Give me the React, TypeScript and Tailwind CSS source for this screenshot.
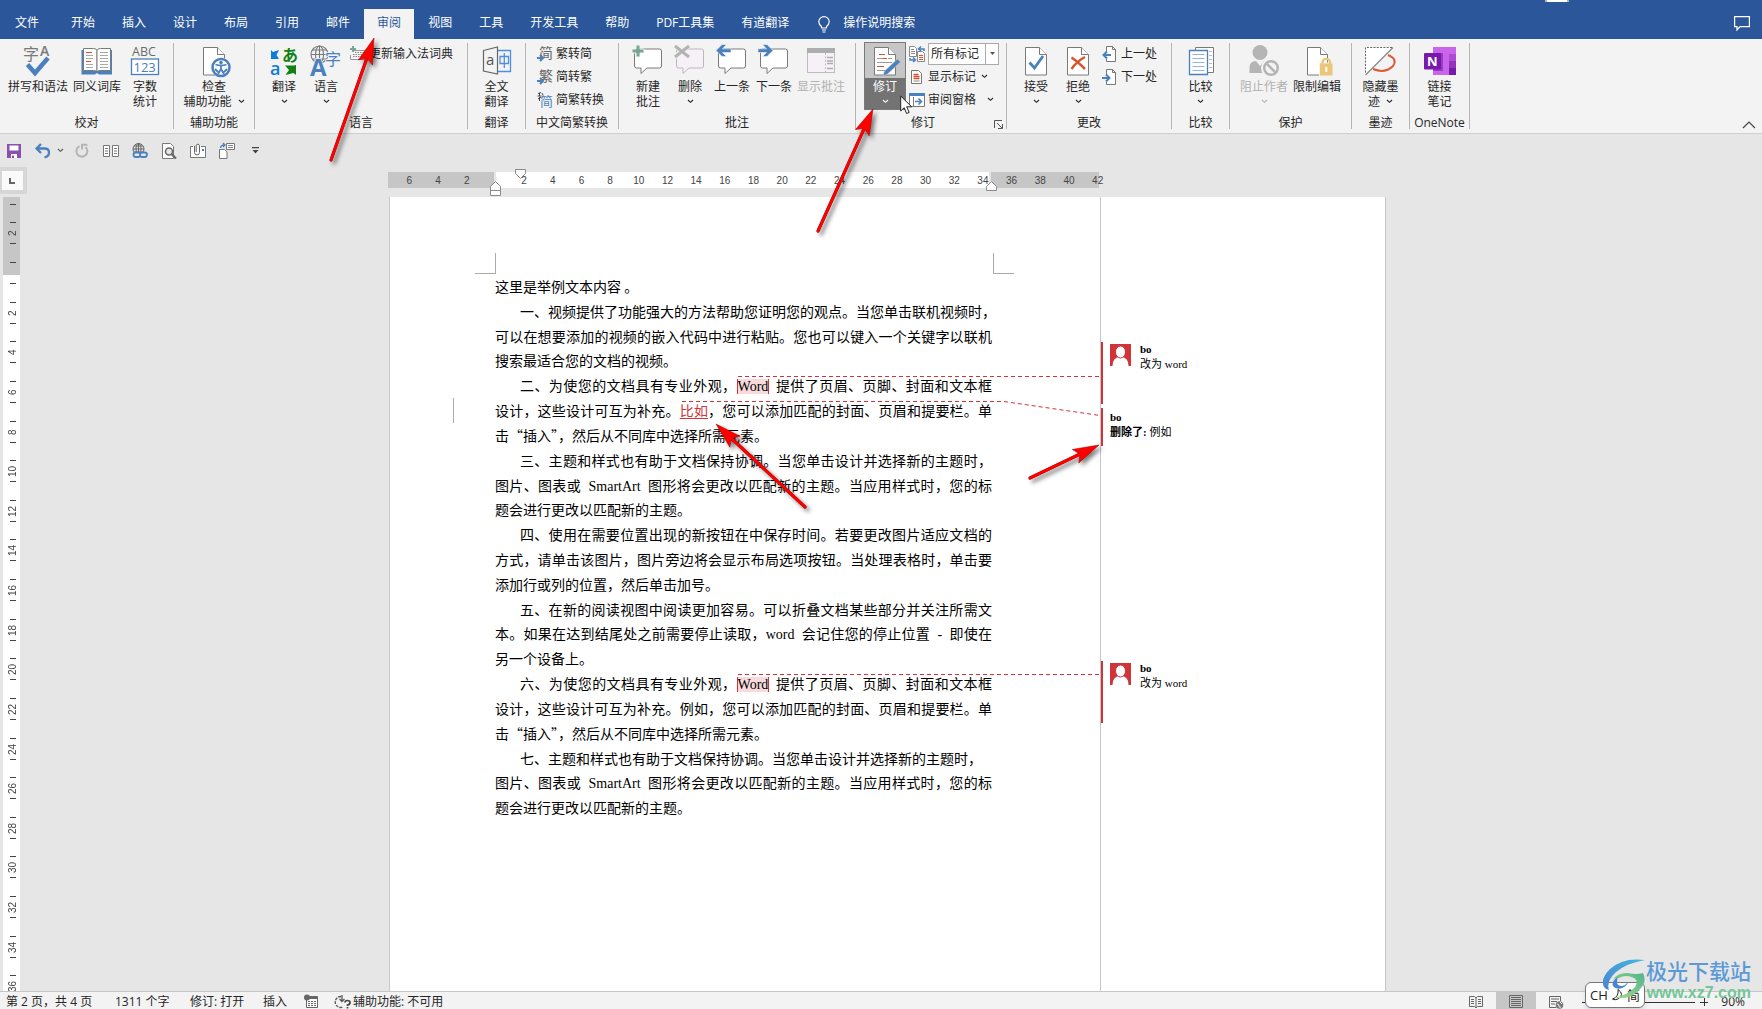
import type { ReactNode } from "react";
import clsx from "clsx";

const BLUE = "#4a80bd";
const GRAY = "#7a7a7a";

/* ---------- small shared bits ---------- */

function Chevron({ className }: { className?: string }) {
  return (
    <svg width="7" height="5" viewBox="0 0 7 5" className={clsx("shrink-0", className)} fill="none" stroke="currentColor" strokeWidth="1.1">
      <path d="M1 1l2.5 2.3L6 1" />
    </svg>
  );
}

function Big({ children }: { children: ReactNode }) {
  return (
    <svg width="32" height="32" viewBox="0 0 32 32" fill="none" className="shrink-0 overflow-visible" fontFamily='"Open Sans","Noto Sans CJK SC",sans-serif'>
      {children}
    </svg>
  );
}

function Small({ children }: { children: ReactNode }) {
  return (
    <svg width="16" height="16" viewBox="0 0 16 16" fill="none" className="shrink-0 overflow-visible" fontFamily='"Open Sans","Noto Sans CJK SC",sans-serif'>
      {children}
    </svg>
  );
}

/* ---------- large ribbon icons ---------- */

const SpellIcon = () => (
  <Big>
    <text x="1" y="15" fontSize="16" fill={GRAY}>字</text>
    <text x="18" y="11" fontSize="14" fontWeight="600" fill={GRAY}>A</text>
    <path d="M5.5 19.500l7.500 8.500L26 13" stroke={BLUE} strokeWidth="4.500" />
  </Big>
);

const BookIcon = () => (
  <Big>
    <path d="M.5 5h30.500v24.500H18l-2-1.500-2 1.500H.5z" fill={BLUE} />
    <path d="M2.500 3.500h10q3 0 3.500 2v21.500q-.5-1.500-3.500-1.500h-10z" fill="#fff" stroke={GRAY} />
    <path d="M29.500 3.500h-10q-3 0-3.500 2v21.500q.5-1.500 3.500-1.500h10z" fill="#fff" stroke={GRAY} />
    <path d="M5 7.500h6M5 16.500h5" stroke="#d8532b" />
    <path d="M5 10.500h7M5 13.500h7M5 19.500h7M5 22.500h7" stroke="#aaa" />
    <path d="M19 7.500h8M19 10.500h8M19 13.500h8M19 16.500h8M19 19.500h8M19 22.500h8" stroke="#aaa" />
  </Big>
);

const CountIcon = () => (
  <Big>
    <text x="3" y="11" fontSize="12.500" fill="#6a6a6a">ABC</text>
    <rect x="2.500" y="14" width="27" height="15.500" fill="#fff" stroke={BLUE} strokeWidth="1.300" />
    <text x="4.500" y="26.500" fontSize="13" fill={BLUE}>123</text>
  </Big>
);

const PageShape = ({ x = 5.5, w = 21 }: { x?: number; w?: number }) => (
  <>
    <path d={`M${x} 2.500h${w - 7}l7 7v20.500h-${w}z`} fill="#fff" stroke={GRAY} />
    <path d={`M${x + w - 7} 2.500v7h7`} fill="#fff" stroke={GRAY} />
  </>
);

const AccessIcon = () => (
  <Big>
    <PageShape />
    <circle cx="23" cy="22.500" r="10" fill="#f3f3f3" />
    <circle cx="23" cy="22.500" r="8.500" fill="#fff" stroke={BLUE} strokeWidth="2.500" />
    <path d="M17.500 19.500q5.500 2 11 0M23 20v4M23 24l-3 5M23 24l3 5M17 24l3 3M29 24l-3 3" stroke={BLUE} strokeWidth="1.800" />
    <circle cx="23" cy="17.500" r="1.800" fill={BLUE} />
  </Big>
);

const TranslateIcon = () => (
  <Big>
    <path d="M3 5l2 2 6-2-2.500 5 2.500 4H3z" fill="#0f7bd8" />
    <text x="2" y="30" fontSize="18" fontWeight="600" fill="#0f7bd8">a</text>
    <text x="14" y="16" fontSize="16" fontWeight="700" fill="#138013">あ</text>
    <path d="M28 20v10l-2.500-2-8 2 3.500-5-4-4.500h9z" fill="#138013" />
  </Big>
);

const LanguageIcon = () => (
  <Big>
    <g stroke={GRAY} strokeWidth="1.100">
      <circle cx="9.500" cy="9.500" r="8.500" />
      <ellipse cx="9.500" cy="9.500" rx="4" ry="8.500" />
      <path d="M9.500 1v17M1 9.500h17M2.500 5h14M2.500 14h14" />
    </g>
    <text x="0" y="31" fontSize="24" fontWeight="700" fill={BLUE} stroke="#f3f3f3" strokeWidth="1.500" paintOrder="stroke">A</text>
    <text x="15" y="20" fontSize="16" fill={BLUE} stroke="#f3f3f3" strokeWidth="1.500" paintOrder="stroke">字</text>
  </Big>
);

const FullTranslateIcon = () => (
  <Big>
    <path d="M2.500 5.500l14-3.500v27l-14-3z" stroke="#666" strokeWidth="1.200" />
    <text x="5" y="20" fontSize="15" fill="#555">a</text>
    <path d="M17 5.500h12.500v21H17M19 11.500h8.500v7H19zM23.300 8v15" stroke="#4f8fe0" strokeWidth="1.300" />
  </Big>
);

const Bubble = ({ muted }: { muted?: boolean }) => (
  <path d="M4.500 4h23a2 2 0 0 1 2 2v15a2 2 0 0 1-2 2H15l-6 5.500V23H4.500a2 2 0 0 1-2-2V6a2 2 0 0 1 2-2z" fill={muted ? "#f6f1f7" : "#fff"} stroke={muted ? "#b9b9b9" : GRAY} />
);

const NewCommentIcon = () => (
  <Big>
    <Bubble />
    <path d="M0 4h4V0h4v4h4v4H8v4H4V8H0z" fill="#74a892" stroke="#f3f3f3" />
  </Big>
);

const DeleteCommentIcon = () => (
  <Big>
    <Bubble muted />
    <path d="M1 0l14 12M15 0L1 12" stroke="#f3f3f3" strokeWidth="5" />
    <path d="M1 1l14 11M15 1L1 12" stroke="#b3b3b3" strokeWidth="3" />
  </Big>
);

const PrevCommentIcon = () => (
  <Big>
    <Bubble />
    <path d="M0 5.500L6-.5h4.500l-4 4.300H15V7.500H6.500l4 4H6z" fill={BLUE} stroke="#f3f3f3" strokeWidth=".6" />
  </Big>
);

const NextCommentIcon = () => (
  <Big>
    <Bubble />
    <path d="M15 5.500L9-.5H4.500l4 4.300H0V7.500h8.500l-4 4H9z" fill={BLUE} stroke="#f3f3f3" strokeWidth=".6" />
  </Big>
);

const ShowCommentsIcon = () => (
  <Big>
    <rect x="2.500" y="3.500" width="27" height="24" fill="#f6f1f7" stroke="#bdbdbd" />
    <path d="M2 3h28v5H2z" fill="#adadad" />
    <path d="M20.500 8v19" stroke="#bdbdbd" strokeDasharray="2 1.500" />
    <path d="M22 12.500h6M22 16h6M22 18.500h6M22 23.500h6" stroke="#adadad" strokeWidth="1.500" />
  </Big>
);

const TrackIcon = () => (
  <Big>
    <PageShape />
    <path d="M8 13.500h9M19 13.500h4M8 17.500h15M8 21.500h4M8 25.500h8" stroke="#999" />
    <path d="M10 9.500h6M14 13.500h4M8 21.500h7" stroke="#d8532b" strokeWidth="1.200" />
    <path d="M28.500 14l3 3-13 12-4.500 2 1.500-5z" fill={BLUE} stroke="#c6c6c6" strokeWidth=".7" />
  </Big>
);

const AcceptIcon = () => (
  <Big>
    <PageShape />
    <path d="M9.500 17.500l5 5.500 8.500-12" stroke={BLUE} strokeWidth="2.800" />
  </Big>
);

const RejectIcon = () => (
  <Big>
    <PageShape />
    <path d="M9.500 12.500q6 4 13.500 11.500M23 12q-8 4-13.500 12" stroke="#d8532b" strokeWidth="2.500" />
  </Big>
);

const CompareIcon = () => (
  <Big>
    <path d="M10.500 2.500h18v25h-18z" fill="#fff" stroke={GRAY} />
    <path d="M24 6.500h3M24 10.500h3M24 14.500h3M24 18.500h3M24 22.500h3" stroke="#bbb" />
    <path d="M4.500 5.500h18v24h-18z" fill="#fff" stroke={BLUE} strokeWidth="1.300" />
    <path d="M7.500 9.500h12M7.500 13.500h12M7.500 17.500h12M7.500 21.500h12M7.500 25.500h12" stroke="#93b4d8" />
  </Big>
);

const BlockAuthorIcon = () => (
  <Big>
    <circle cx="12" cy="7.500" r="7.500" fill="#b5b5b5" />
    <path d="M1.500 28v-5q0-7 6.500-7l4 5 4-5q6 0 6.500 5v7z" fill="#b5b5b5" />
    <circle cx="23" cy="23" r="8" fill="#f3f3f3" stroke="#f3f3f3" strokeWidth="4" />
    <circle cx="23" cy="23" r="6.800" stroke="#b5b5b5" strokeWidth="2.500" />
    <path d="M18 18l10 10" stroke="#b5b5b5" strokeWidth="2.500" />
  </Big>
);

const RestrictIcon = () => (
  <Big>
    <PageShape x={6.5} w={20} />
    <path d="M18.500 18v13h13.500V18z" fill="#ecc67a" stroke="#f3f3f3" />
    <path d="M21.500 19v-2.500a4 4 0 0 1 7.500 0V19" stroke="#ecc67a" strokeWidth="2.300" />
    <path d="M25.300 22v5" stroke="#fff" strokeWidth="2" />
  </Big>
);

const HideInkIcon = () => (
  <Big>
    <path d="M23 10q10 4 5 11-8 8-20 3" stroke="#dd5a38" strokeWidth="2" />
    <path d="M.5 2.500h27L.5 29.500z" fill="#fff" />
    <path d="M27 2.500H.5v26" stroke="#666" strokeDasharray="2 1.300" />
    <path d="M28 2.500L.5 30" stroke="#888" strokeWidth="1.300" />
  </Big>
);

const OneNoteIcon = () => (
  <Big>
    <path d="M9 2h23v28H9z" fill="#ca64ea" />
    <path d="M25 9h7v7h-7z" fill="#ae4bd5" />
    <path d="M25 16h7v7h-7z" fill="#9332bf" />
    <path d="M25 23h7v7h-7z" fill="#7719aa" />
    <path d="M9 8h10v18H9z" fill="#9a3bc4" />
    <rect x="0" y="8" width="17" height="16.500" rx="1" fill="#7719aa" />
    <text x="3" y="21" fontSize="13" fontWeight="700" fill="#fff">N</text>
  </Big>
);

/* ---------- small ribbon icons ---------- */

const DictIcon = () => (
  <Small>
    <path d="M3.500 4.500h12v9H.5V9" stroke="#999" />
    <path d="M3 8.500h11M3 10.500h11M5 6.500h9" stroke="#888" strokeDasharray="1.500 1" />
    <path d="M0 3h6M3 0v6" stroke="#74a892" strokeWidth="2" />
  </Small>
);

function ConvertIcon({ char, blue }: { char: string; blue?: boolean }) {
  return (
    <Small>
      {blue ? (
        <>
          <path d="M1 1.500l3-1M2.500 1v3M.5 4h4M1 7l3-2M2.500 5v4M5 1l1 2" stroke="#444" />
          <text x="3" y="14" fontSize="13" fill={BLUE}>{char}</text>
        </>
      ) : (
        <>
          <text x="2" y="12" fontSize="14" fill="#666">{char}</text>
          <path d="M0 12h5M3 9l3 3-3 3" stroke={BLUE} strokeWidth="2" />
        </>
      )}
    </Small>
  );
}

const MarkupViewIcon = () => (
  <Small>
    <path d="M.5.5h5l2 2v8h-7zM8.500 5.500h5l2 2v8h-7z" fill="#fff" stroke="#888" />
    <path d="M2 3.500h3M2 5.500h4M2 7.500h4" stroke="#888" />
    <path d="M10 9.500h4M10 11.500h4M10 13.500h4" stroke="#d8532b" />
    <path d="M15 5V3H10m2-2.500L9.500 3 12 5M1 12v2h5M4 11.500L6.500 14 4 16" stroke={BLUE} strokeWidth="1.500" />
  </Small>
);

const ShowMarkupIcon = () => (
  <Small>
    <path d="M2.500 1.500h7l3 3v10h-10z" fill="#fff" stroke="#777" />
    <path d="M4.500 5.500h5M4.500 7.500h6M4.500 9.500h6" stroke="#d8532b" strokeWidth="1.300" />
    <path d="M4.500 12h6" stroke="#888" />
  </Small>
);

const PaneIcon = () => (
  <Small>
    <path d="M.5 2.500h15v12H.5z" fill="#fff" stroke={GRAY} />
    <path d="M0 1h16v3H0z" fill={BLUE} />
    <path d="M4.500 5v9" stroke={GRAY} />
    <path d="M6 9.500h6M9.500 6.500l3 3-3 3" stroke={BLUE} strokeWidth="1.600" />
  </Small>
);

function StepIcon({ back }: { back?: boolean }) {
  return (
    <Small>
      <path d="M4.500 6V.5h6l3 3v12h-9V13" fill="#fff" stroke="#777" />
      <path d="M10.500.5v3h3" stroke="#777" />
      {back ? (
        <path d="M9 9H2M5 5.500L1.500 9 5 12.500" stroke={BLUE} strokeWidth="2" />
      ) : (
        <path d="M0 9h7M4 5.500L7.500 9 4 12.500" stroke={BLUE} strokeWidth="2" />
      )}
    </Small>
  );
}

/* ---------- ribbon building blocks ---------- */

type GroupProps = { label: string; className: string; inner?: string; launcher?: boolean; children: ReactNode };

function Group({ label, className, inner, launcher, children }: GroupProps) {
  return (
    <section aria-label={label} className={clsx("relative mt-1 flex h-[86px] shrink-0 flex-col border-r border-[#b5b5b5]", className)}>
      <div className={clsx("flex flex-1", inner)}>{children}</div>
      <div className={clsx("text-center leading-3", launcher && "pr-4")}>{label}</div>
      {launcher && (
        <button aria-label="修订选项" className="absolute bottom-0 right-[3px]">
          <svg width="9" height="9" viewBox="0 0 9 9" fill="none" stroke="#555" className="block">
            <path d="M.5 8V.5H8M3 3l5 5M8.500 4v4.500H4" />
          </svg>
        </button>
      )}
    </section>
  );
}

type BigButtonProps = { icon: ReactNode; lines: string[]; chevron?: "below" | "inline"; disabled?: boolean; className?: string };

function BigButton({ icon, lines, chevron, disabled, className }: BigButtonProps) {
  return (
    <button disabled={disabled} className={clsx("flex shrink-0 flex-col items-center self-start whitespace-nowrap pt-[2px] leading-[15px]", disabled && "text-[#b1b1b1]", className)}>
      {icon}
      <span className="mt-[2px] block">{lines[0]}</span>
      {lines[1] && (
        <span className="flex items-center gap-1.5">
          {lines[1]}
          {chevron === "inline" && <Chevron />}
        </span>
      )}
      {chevron === "below" && <Chevron className="mt-[5px]" />}
    </button>
  );
}

function SmallButton({ icon, label, chevron, wide }: { icon: ReactNode; label: string; chevron?: boolean; wide?: boolean }) {
  return (
    <button className="flex h-[23px] items-center gap-[3px] whitespace-nowrap">
      {icon}
      {label}
      {chevron && <Chevron className={wide ? "ml-2" : "ml-0.5"} />}
    </button>
  );
}

const SmallColumn = ({ children }: { children: ReactNode }) => <div className="-mt-px ml-[3px] flex flex-col">{children}</div>;

function TrackGroup() {
  return (
    <Group label="修订" launcher className="w-[151px]" inner="pl-2">
      <button className="-mt-px flex h-[68px] w-[42px] shrink-0 flex-col items-center border border-[#7a7a7a] bg-[#737373] leading-[15px] text-white">
        <span className="flex w-full justify-center bg-[#c6c6c6] pb-px pt-[2px]">
          <TrackIcon />
        </span>
        <span className="mt-px block">修订</span>
        <Chevron className="mt-[5px]" />
      </button>
      <SmallColumn>
        <div className="flex h-[23px] items-center gap-[3px]">
          <MarkupViewIcon />
          <div className="relative">
            <select aria-label="显示以供审阅" className="block h-[22px] w-[71px] appearance-none border border-[#ababab] bg-white pl-[2px] leading-5">
              <option>所有标记</option>
            </select>
            <span className="pointer-events-none absolute inset-y-0 right-0 flex w-[14px] items-center justify-center border border-[#ababab]">
              <svg width="5" height="3" viewBox="0 0 5 3"><path d="M0 0h5L2.500 3z" fill="#555" /></svg>
            </span>
          </div>
        </div>
        <SmallButton icon={<ShowMarkupIcon />} label="显示标记" chevron />
        <SmallButton icon={<PaneIcon />} label="审阅窗格" chevron wide />
      </SmallColumn>
    </Group>
  );
}

function Ribbon() {
  return (
    <div className="relative flex h-[95px] shrink-0 overflow-hidden border-b border-[#cfcfcf] bg-[#f3f3f3]">
      <Group label="校对" className="w-[174px]" inner="pl-[5px]">
        <BigButton icon={<SpellIcon />} lines={["拼写和语法"]} className="w-[66px]" />
        <BigButton icon={<BookIcon />} lines={["同义词库"]} className="w-[52px]" />
        <BigButton icon={<CountIcon />} lines={["字数", "统计"]} className="w-11" />
      </Group>
      <Group label="辅助功能" className="w-[81px]">
        <BigButton icon={<AccessIcon />} lines={["检查", "辅助功能"]} chevron="inline" className="w-full" />
      </Group>
      <Group label="语言" className="w-[213px]" inner="pl-2">
        <BigButton icon={<TranslateIcon />} lines={["翻译"]} chevron="below" className="w-[42px]" />
        <BigButton icon={<LanguageIcon />} lines={["语言"]} chevron="below" className="w-[42px]" />
        <SmallColumn>
          <SmallButton icon={<DictIcon />} label="更新输入法词典" />
        </SmallColumn>
      </Group>
      <Group label="翻译" className="w-[58px]">
        <BigButton icon={<FullTranslateIcon />} lines={["全文", "翻译"]} className="w-full" />
      </Group>
      <Group label="中文简繁转换" className="w-[93px]" inner="pl-2">
        <SmallColumn>
          <SmallButton icon={<ConvertIcon char="简" />} label="繁转简" />
          <SmallButton icon={<ConvertIcon char="繁" />} label="简转繁" />
          <SmallButton icon={<ConvertIcon char="简" blue />} label="简繁转换" />
        </SmallColumn>
      </Group>
      <Group label="批注" className="w-[237px]" inner="px-2">
        <BigButton icon={<NewCommentIcon />} lines={["新建", "批注"]} className="w-[42px]" />
        <BigButton icon={<DeleteCommentIcon />} lines={["删除"]} chevron="below" className="w-[42px]" />
        <BigButton icon={<PrevCommentIcon />} lines={["上一条"]} className="w-[42px]" />
        <BigButton icon={<NextCommentIcon />} lines={["下一条"]} className="w-[42px]" />
        <BigButton icon={<ShowCommentsIcon />} lines={["显示批注"]} disabled className="w-[52px]" />
      </Group>
      <TrackGroup />
      <Group label="更改" className="w-[165px]" inner="px-2">
        <BigButton icon={<AcceptIcon />} lines={["接受"]} chevron="below" className="w-[42px]" />
        <BigButton icon={<RejectIcon />} lines={["拒绝"]} chevron="below" className="w-[42px]" />
        <SmallColumn>
          <SmallButton icon={<StepIcon back />} label="上一处" />
          <SmallButton icon={<StepIcon />} label="下一处" />
        </SmallColumn>
      </Group>
      <Group label="比较" className="w-[58px]">
        <BigButton icon={<CompareIcon />} lines={["比较"]} chevron="below" className="w-full" />
      </Group>
      <Group label="保护" className="w-[122px]" inner="px-2">
        <BigButton icon={<BlockAuthorIcon />} lines={["阻止作者"]} chevron="below" disabled className="w-[52px]" />
        <BigButton icon={<RestrictIcon />} lines={["限制编辑"]} className="w-[54px]" />
      </Group>
      <Group label="墨迹" className="w-[58px]">
        <BigButton icon={<HideInkIcon />} lines={["隐藏墨", "迹"]} chevron="inline" className="w-full" />
      </Group>
      <Group label="OneNote" className="w-[60px]">
        <BigButton icon={<OneNoteIcon />} lines={["链接", "笔记"]} className="w-full" />
      </Group>
      <button aria-label="折叠功能区" className="mb-1 ml-auto mr-1.5 self-end">
        <svg width="14" height="8" viewBox="0 0 14 8" fill="none" stroke="#444" strokeWidth="1.200"><path d="M1 7l6-6 6 6" /></svg>
      </button>
    </div>
  );
}

/* ---------- tabs and quick access ---------- */

const tabs = ["文件", "开始", "插入", "设计", "布局", "引用", "邮件", "审阅", "视图", "工具", "开发工具", "帮助", "PDF工具集", "有道翻译"];

function TabBar() {
  return (
    <header className="relative flex h-[39px] shrink-0 items-end bg-[#2b579a] pl-[2px] text-white">
      <nav className="flex gap-px">
        {tabs.map((tab) => (
          <button
            key={tab}
            className={clsx("h-[30px] whitespace-nowrap px-[13px] pb-[3px]", tab === "审阅" && "bg-[#f3f3f3] text-[#2b579a]", tab === "文件" && "mr-[5px]")}
          >
            {tab}
          </button>
        ))}
      </nav>
      <button className="ml-4 flex h-[30px] items-center gap-[13px] pb-[3px]">
        <svg width="12" height="17" viewBox="0 0 12 17" fill="none" stroke="#fff" strokeWidth="1.200" className="mt-1">
          <path d="M3.500 12V10.500Q.8 8.500.8 5.800a5.200 5.200 0 0 1 10.400 0Q11.200 8.500 8.500 10.500V12zM4 14h4M4.500 16h3" />
        </svg>
        操作说明搜索
      </button>
      <span className="absolute right-[193px] top-0 h-[2px] w-6 border-x-2 border-[#b5b5b5] bg-white" />
      <button aria-label="批注" className="mb-2 ml-auto mr-3">
        <svg width="16" height="15" viewBox="0 0 16 15" fill="none" stroke="#fff" strokeWidth="1.200" className="block">
          <path d="M.6.6h14.800v10H6l-3 3.400v-3.400H.6z" />
        </svg>
      </button>
    </header>
  );
}

function QuickAccess() {
  return (
    <div className="flex h-[33px] shrink-0 items-center pl-1.5 text-[#555]">
      <button aria-label="保存">
        <Small>
          <path d="M1 1h14v14H1z" fill="#8a4fb0" />
          <path d="M3.500 2.500h9v5h-9zM5 11h6v4H5z" fill="#fff" />
          <path d="M6 12.500h2V15H6z" fill="#8a4fb0" />
        </Small>
      </button>
      <button aria-label="撤消" className="ml-[13px]">
        <Small><path d="M2 5.500h7.500q4.500 0 4.500 4t-4.500 5M6 1L1.500 5.500 6 10" stroke={BLUE} strokeWidth="2.300" /></Small>
      </button>
      <Chevron className="ml-[6px]" />
      <button aria-label="重复" className="ml-[10px]">
        <Small><path d="M5.500 3.200A5.500 5.500 0 1 0 11.500 4M8 6.500V1.800h5.500" stroke="#b5b5b5" strokeWidth="2" /></Small>
      </button>
      <button aria-label="多页" className="ml-[13px]">
        <Small>
          <path d="M.5 2.500h6v11h-6zM9.500 2.500h6v11h-6z" fill="#fff" stroke="#777" />
          <path d="M2 5.500h3M2 8h3M2 10.500h3M11 5.500h3M11 8h3M11 10.500h3" stroke="#777" />
        </Small>
      </button>
      <button aria-label="超链接" className="ml-[13px]">
        <Small>
          <g stroke="#666"><circle cx="6.500" cy="6" r="5.500" /><path d="M1 6h11M6.500.5v11M2 3h9M2 9h9" /><ellipse cx="6.500" cy="6" rx="2.500" ry="5.500" /></g>
          <rect x="1.500" y="9.500" width="7" height="4.500" rx="2.200" fill="#e6e6e6" stroke={BLUE} strokeWidth="1.800" />
          <rect x="8" y="9.500" width="7" height="4.500" rx="2.200" fill="#e6e6e6" stroke={BLUE} strokeWidth="1.800" />
        </Small>
      </button>
      <button aria-label="打印预览" className="ml-[13px]">
        <Small>
          <path d="M1.500.5h8l3 3v12h-11z" fill="#fff" stroke="#777" />
          <circle cx="8" cy="8.500" r="3.500" fill="#e6e6e6" stroke="#666" strokeWidth="1.500" />
          <path d="M10.500 11l4.500 4.500" stroke="#666" strokeWidth="2.200" />
        </Small>
      </button>
      <button aria-label="附件" className="ml-[13px]">
        <Small>
          <path d="M3 3.500H.5v11h15v-11H11" fill="#fff" stroke="#777" />
          <path d="M4.500 3v6.500a2.500 2.500 0 0 0 5 0V2.500a1.700 1.700 0 0 0-3.300 0V9" stroke="#666" />
          <path d="M12 6h2v2h-2z" fill={BLUE} />
        </Small>
      </button>
      <button aria-label="发送" className="ml-[13px]">
        <Small>
          <path d="M7.500.5h8v6h-8zM.5 6.500h5l2.500 2.500v6.500H.5z" fill="#fff" stroke="#777" />
          <path d="M9 2.500h5M9 4.500h5" stroke="#888" />
          <path d="M1.500 5q0-3 4-3M4 0l2 2-2 2" stroke={BLUE} strokeWidth="1.300" />
        </Small>
      </button>
      <button aria-label="自定义快速访问工具栏" className="ml-[17px]">
        <svg width="7" height="7" viewBox="0 0 7 7"><path d="M0 0h7v1.300H0zM.5 3h6L3.500 6.500z" fill="#444" /></svg>
      </button>
    </div>
  );
}

/* ---------- rulers ---------- */

const hMarks = ["6", "4", "2", "", ...Array.from({ length: 21 }, (_, i) => String((i + 1) * 2))];
const vMarks = ["", "2", "", ...Array.from({ length: 18 }, (_, i) => String((i + 1) * 2))];

function RulerRow() {
  return (
    <div className="flex h-[30px] shrink-0">
      <button aria-label="制表符" className="size-[27px] shrink-0 bg-[#d6d6d6] py-1 pl-[2px]">
        <span className="block h-[19px] w-[21px] bg-[#fafafa] pl-[7px] pt-[7px]">
          <span className="block size-[6px] border-b-2 border-l-2 border-[#666]" />
        </span>
      </button>
      <div className="-ml-[7px] flex-1 pr-[7px]">
        <div className="relative mx-auto w-[997px] pt-[5px]">
          <div className="-ml-px flex h-4 w-[711px] gap-[2px]">
            <div className="w-[106px] bg-[#c6c6c6]" />
            <div className="flex-1 bg-white" />
            <div className="w-[108px] bg-[#c6c6c6]" />
          </div>
          <div className="absolute left-[6px] top-[5px] grid w-[717px] grid-cols-[repeat(25,1fr)] text-center font-[Liberation_Sans] text-[10px] leading-[18px] text-[#444]">
            {hMarks.map((mark, i) => (
              <span key={i}>{mark}</span>
            ))}
          </div>
          <svg width="711" height="30" className="absolute left-0 top-0" fill="#fff" stroke="#8a8a8a">
            <path d="M126.500 2.500h10v4l-5 5-5-5z" />
            <path d="M101.500 28.500v-9l5-5 5 5v9zM101.500 23.500h10" />
            <path d="M597.500 23.500v-4l5-5 5 5v4z" />
          </svg>
        </div>
      </div>
    </div>
  );
}

function VerticalRuler() {
  return (
    <div className="w-5 shrink-0 overflow-hidden pl-[3px]">
      <div className="relative h-[809px] bg-white">
        <div className="h-[78px] bg-[#c6c6c6]" />
        <div className="absolute inset-x-0 bottom-0 flex h-[832px] flex-col font-[Liberation_Sans] text-[10px] leading-3 text-[#444]">
          {vMarks.map((mark, i) => (
            <div key={i} className="flex flex-1 flex-col items-center justify-center gap-[2px] pl-[3px]">
              <span className="h-px w-[6px] bg-[#444]" />
              <span className="h-4 rotate-180 text-center [writing-mode:vertical-rl]">{mark}</span>
              <span className="h-px w-[6px] bg-[#444]" />
            </div>
          ))}
        </div>
      </div>
    </div>
  );
}

/* ---------- document ---------- */

const Latin = ({ children }: { children: ReactNode }) => <span className="mx-1 font-[Liberation_Serif]">{children}</span>;

const Marked = ({ children }: { children: ReactNode }) => (
  <span className="mr-[3px] border-x border-[#d13438] bg-[#f8dadc] font-[Liberation_Serif]">{children}</span>
);

type Line = { text: ReactNode; indent?: boolean; full?: boolean };

const smartArt = (
  <>
    图片、图表或 <Latin>SmartArt</Latin> 图形将会更改以匹配新的主题。当应用样式时，您的标
  </>
);

const looks = (
  <>
    、为使您的文档具有专业外观，<Marked>Word</Marked> 提供了页眉、页脚、封面和文本框
  </>
);

const lines: Line[] = [
  { text: "这里是举例文本内容 。" },
  { text: "一、视频提供了功能强大的方法帮助您证明您的观点。当您单击联机视频时，", indent: true },
  { text: "可以在想要添加的视频的嵌入代码中进行粘贴。您也可以键入一个关键字以联机", full: true },
  { text: "搜索最适合您的文档的视频。" },
  { text: <>二{looks}</>, indent: true, full: true },
  {
    text: (
      <>
        设计，这些设计可互为补充。<ins className="text-[#d13438] underline underline-offset-2">比如</ins>，您可以添加匹配的封面、页眉和提要栏。单
      </>
    ),
    full: true,
  },
  { text: "击“插入”，然后从不同库中选择所需元素。" },
  { text: "三、主题和样式也有助于文档保持协调。当您单击设计并选择新的主题时，", indent: true, full: true },
  { text: smartArt, full: true },
  { text: "题会进行更改以匹配新的主题。" },
  { text: "四、使用在需要位置出现的新按钮在中保存时间。若要更改图片适应文档的", indent: true, full: true },
  { text: "方式，请单击该图片，图片旁边将会显示布局选项按钮。当处理表格时，单击要", full: true },
  { text: "添加行或列的位置，然后单击加号。" },
  { text: "五、在新的阅读视图中阅读更加容易。可以折叠文档某些部分并关注所需文", indent: true, full: true },
  {
    text: (
      <>
        本。如果在达到结尾处之前需要停止读取，<span className="mr-1 font-[Liberation_Serif]">word</span> 会记住您的停止位置 <Latin>-</Latin> 即使在
      </>
    ),
    full: true,
  },
  { text: "另一个设备上。" },
  { text: <>六{looks}</>, indent: true, full: true },
  { text: "设计，这些设计可互为补充。例如，您可以添加匹配的封面、页眉和提要栏。单", full: true },
  { text: "击“插入”，然后从不同库中选择所需元素。" },
  { text: "七、主题和样式也有助于文档保持协调。当您单击设计并选择新的主题时，", indent: true },
  { text: smartArt, full: true },
  { text: "题会进行更改以匹配新的主题。" },
];

function Avatar() {
  return (
    <svg width="21" height="22" viewBox="0 0 21 22" className="mt-[2px] shrink-0">
      <path d="M0 0h21v22H0z" fill="#d13438" />
      <path d="M2.500 22q0-9 8-9t8 9z" fill="#fff" />
      <ellipse cx="10.500" cy="8" rx="5" ry="6" fill="#fff" stroke="#d13438" />
    </svg>
  );
}

function Comment() {
  return (
    <article className="flex h-[62px] gap-[9px] border-l-2 border-[#d13438] pl-[7px]">
      <Avatar />
      <div className="leading-[15px]">
        <b className="block">bo</b>
        改为 word
      </div>
    </article>
  );
}

function Page() {
  return (
    <div className="relative mx-auto flex h-full w-[997px] border-x border-[#c6c6c6] bg-white">
      <div className="w-[711px] shrink-0 border-r border-[#c6c6c6] pt-14">
        <div className="ml-[85px] flex h-[21px] w-[539px] justify-between">
          <span className="w-[21px] border-b border-r border-[#ababab]" />
          <span className="w-[21px] border-b border-l border-[#ababab]" />
        </div>
        <div className="ml-[105px] grid h-[546px] w-[497px] auto-rows-fr grid-cols-1 font-['Noto_Sans_CJK_SC',sans-serif] text-[14px] leading-[25px] text-black">
          {lines.map((line, i) => (
            <p key={i} className={clsx(line.indent && "pl-[25px]", line.full ? "text-justify [text-align-last:justify]" : "whitespace-nowrap")}>
              {line.text}
            </p>
          ))}
        </div>
      </div>
      <aside aria-label="修订" className="flex-1 pt-[145px] font-[Liberation_Serif,'Noto_Sans_CJK_SC',serif] text-[11px] text-black">
        <Comment />
        <article className="mt-1 h-[38px] border-l-2 border-[#d13438] pl-[7px] pt-[2px] leading-[15px]">
          <b className="block">bo</b>
          <b>删除了:</b> 例如
        </article>
        <div className="mt-[215px]">
          <Comment />
        </div>
      </aside>
      <svg width="710" height="600" className="pointer-events-none absolute left-0 top-0" fill="none" stroke="#d13438" strokeDasharray="4 3">
        <path d="M348 179.500h362" />
        <path d="M292 204.500h322l96 14" />
        <path d="M348 477.500h362" />
        <path d="M63.500 201v25" stroke="#ababab" strokeDasharray="none" />
      </svg>
    </div>
  );
}

/* ---------- status bar ---------- */

function StatusBar() {
  return (
    <footer className="flex h-[18px] shrink-0 items-center whitespace-nowrap border-t border-[#c6c6c6] bg-[#f3f3f3] pl-1.5 pr-[17px] pt-[3px] leading-[14px]">
      <span className="w-[109px]">第 2 页，共 4 页</span>
      <span className="w-[75px]">1311 个字</span>
      <span className="w-[73px]">修订: 打开</span>
      <span className="w-10">插入</span>
      <Small>
        <path d="M3.500 2.500h11v11h-11z" fill="#fff" stroke="#666" />
        <path d="M4 4h11" stroke="#666" strokeWidth="2" />
        <path d="M5 7.500h8M5 9.500h8M5 11.500h8" stroke="#666" strokeDasharray="2 1" />
        <circle cx="4" cy="3.500" r="3" fill="#666" />
      </Small>
      <span className="ml-4 flex items-center gap-[2px]">
        <Small>
          <path d="M6 2.500a5.500 5.500 0 1 0 2 10.500" stroke="#555" strokeWidth="1.300" strokeDasharray="3 1" />
          <path d="M7 1v6M4.500 5L7 7.500 9.500 5" stroke="#555" strokeWidth="1.300" />
          <path d="M10 8.500q0-2 2.500-2t2.500 2-2.500 2.500v1M12.500 13v1.500" stroke="#444" strokeWidth="1.700" />
        </Small>
        辅助功能: 不可用
      </span>
      <div className="ml-auto flex h-[14px] items-center">
        <button aria-label="阅读视图" className="flex w-10 justify-center">
          <Small>
            <path d="M1.500 2.500h5L8 4l1.500-1.500h5v10h-5L8 14l-1.500-1.500h-5zM8 4v10" stroke="#666" />
            <path d="M3 5.500h3M3 7.500h3M3 9.500h3M10 5.500h3M10 7.500h3M10 9.500h3" stroke="#666" />
          </Small>
        </button>
        <button aria-label="页面视图" className="-mt-[3px] flex h-[17px] w-10 items-end justify-center bg-[#c6c6c6]">
          <Small>
            <path d="M1.500 2.500h13v12h-13z" stroke="#666" />
            <path d="M3 4.500h10M3 6.500h10M3 8.500h10M3 10.500h10M3 12.500h10" stroke="#666" />
          </Small>
        </button>
        <button aria-label="Web 版式视图" className="flex w-10 justify-center">
          <Small>
            <path d="M8 13.500H1.500v-11h11V7" stroke="#666" />
            <path d="M3 5h8M3 7.500h6M3 10h4" stroke="#666" />
            <circle cx="11.500" cy="11" r="3.800" fill="#777" />
            <path d="M9 10q2 0 2 2t2 1M12 8l2 2" stroke="#f3f3f3" />
          </Small>
        </button>
        <button aria-label="缩小" className="ml-1.5 h-px w-2 bg-[#333]" />
        <input
          type="range"
          aria-label="显示比例"
          min="10"
          max="200"
          defaultValue="90"
          className="ml-[5px] h-px w-[100px] appearance-none bg-[#333] [&::-webkit-slider-thumb]:h-[10px] [&::-webkit-slider-thumb]:w-1 [&::-webkit-slider-thumb]:appearance-none [&::-webkit-slider-thumb]:bg-[#333]"
        />
        <button aria-label="放大" className="ml-[5px]">
          <svg width="8" height="8" viewBox="0 0 8 8" stroke="#333" className="block"><path d="M0 4.500h8M4.500 0v8" /></svg>
        </button>
        <span className="ml-[13px]">90%</span>
      </div>
    </footer>
  );
}

/* ---------- things floating over the window ---------- */

function Arrow({ from, to }: { from: [number, number]; to: [number, number] }) {
  const dx = from[0] - to[0];
  const dy = from[1] - to[1];
  const length = Math.hypot(dx, dy);
  const angle = (Math.atan2(dy, dx) * 180) / Math.PI;
  return (
    <g transform={`translate(${to[0]} ${to[1]}) rotate(${angle})`}>
      <path d={`M18 0H${length}`} stroke="#a00000" strokeWidth="3.200" strokeLinecap="round" />
      <path d="M0 0L26-7.500 21 0l5 7.500z" fill="#f00" stroke="#a00000" strokeWidth=".5" />
      <path d={`M18 0H${length}`} stroke="#f00" strokeWidth="2.600" strokeLinecap="round" />
    </g>
  );
}

function Annotations() {
  return (
    <svg width="1200" height="560" fill="none" className="pointer-events-none absolute left-0 top-0 drop-shadow-[3px_3px_2px_rgba(0,0,0,0.5)]">
      <Arrow from={[331, 160]} to={[374, 38]} />
      <Arrow from={[818, 231]} to={[873, 109]} />
      <Arrow from={[805, 507]} to={[716, 424]} />
      <Arrow from={[1030, 478]} to={[1099, 445]} />
    </svg>
  );
}

function Cursor() {
  return (
    <svg width="13" height="20" viewBox="0 0 13 20" className="pointer-events-none absolute left-[900px] top-[95px]">
      <path d="M.7 1v15l3.500-3.300L6.600 18.500l2.600-1.100-2.500-5.600h5z" fill="#fff" stroke="#222" />
    </svg>
  );
}

function Watermark() {
  return (
    <div className="pointer-events-none absolute bottom-[6px] right-[11px] flex items-end gap-px">
      <svg width="42" height="44" viewBox="0 0 42 44">
        <defs>
          <linearGradient id="sky" x1="0" y1="1" x2="1" y2="0">
            <stop offset="0" stopColor="#4a86d0" />
            <stop offset="1" stopColor="#45b5e0" />
          </linearGradient>
          <linearGradient id="leaf" x1="0" y1="1" x2="1" y2="0">
            <stop offset="0" stopColor="#a8d98a" />
            <stop offset="1" stopColor="#4fb58c" />
          </linearGradient>
        </defs>
        <path d="M42 1Q20-2 7 10-3 20 1 28q2 3 5 3-3-9 7-18Q24 4 42 1z" fill="url(#sky)" />
        <path d="M10 20q5-6 14-6 10 2 16 0 4 8-2 15-9 12-27 10 14-3 21-11 4-6-1-9-8-4-15 0z" fill="url(#leaf)" />
        <path d="M15 18q-7 4-5 9 3 4 9 2 5-2 6-6-2 3-6 4-5 0-5-4 0-3 1-5z" fill="#4a86d0" />
      </svg>
      <div className="text-right">
        <div className="text-[21px] font-medium leading-6 text-[#5b9ad6]">极光下载站</div>
        <div className="font-[Liberation_Sans] text-[16px] font-bold leading-5 text-[#74c69a]">www.xz7.com</div>
      </div>
    </div>
  );
}

function ImeBar() {
  return (
    <div className="absolute bottom-px right-[117px] flex h-[26px] w-[60px] items-center justify-center gap-1 rounded-md border border-[#777] bg-white text-[13px] leading-4 text-[#222] shadow-md">
      CH
      <svg width="11" height="12" viewBox="0 0 11 12" fill="none" stroke="#222"><path d="M6 .5q7 5 0 9.500-3 1.500-5.500 0Q7 8 6 .5z" /></svg>
      简
    </div>
  );
}

export default function App() {
  return (
    <div className="relative flex h-screen flex-col overflow-hidden bg-[#e6e6e6] font-['Open_Sans','Noto_Sans_CJK_SC',sans-serif] text-[12px] text-[#262626]">
      <TabBar />
      <Ribbon />
      <QuickAccess />
      <RulerRow />
      <div className="flex min-h-0 flex-1">
        <VerticalRuler />
        <main className="flex-1 pr-[7px]">
          <Page />
        </main>
      </div>
      <StatusBar />
      <Annotations />
      <Cursor />
      <ImeBar />
      <Watermark />
    </div>
  );
}
